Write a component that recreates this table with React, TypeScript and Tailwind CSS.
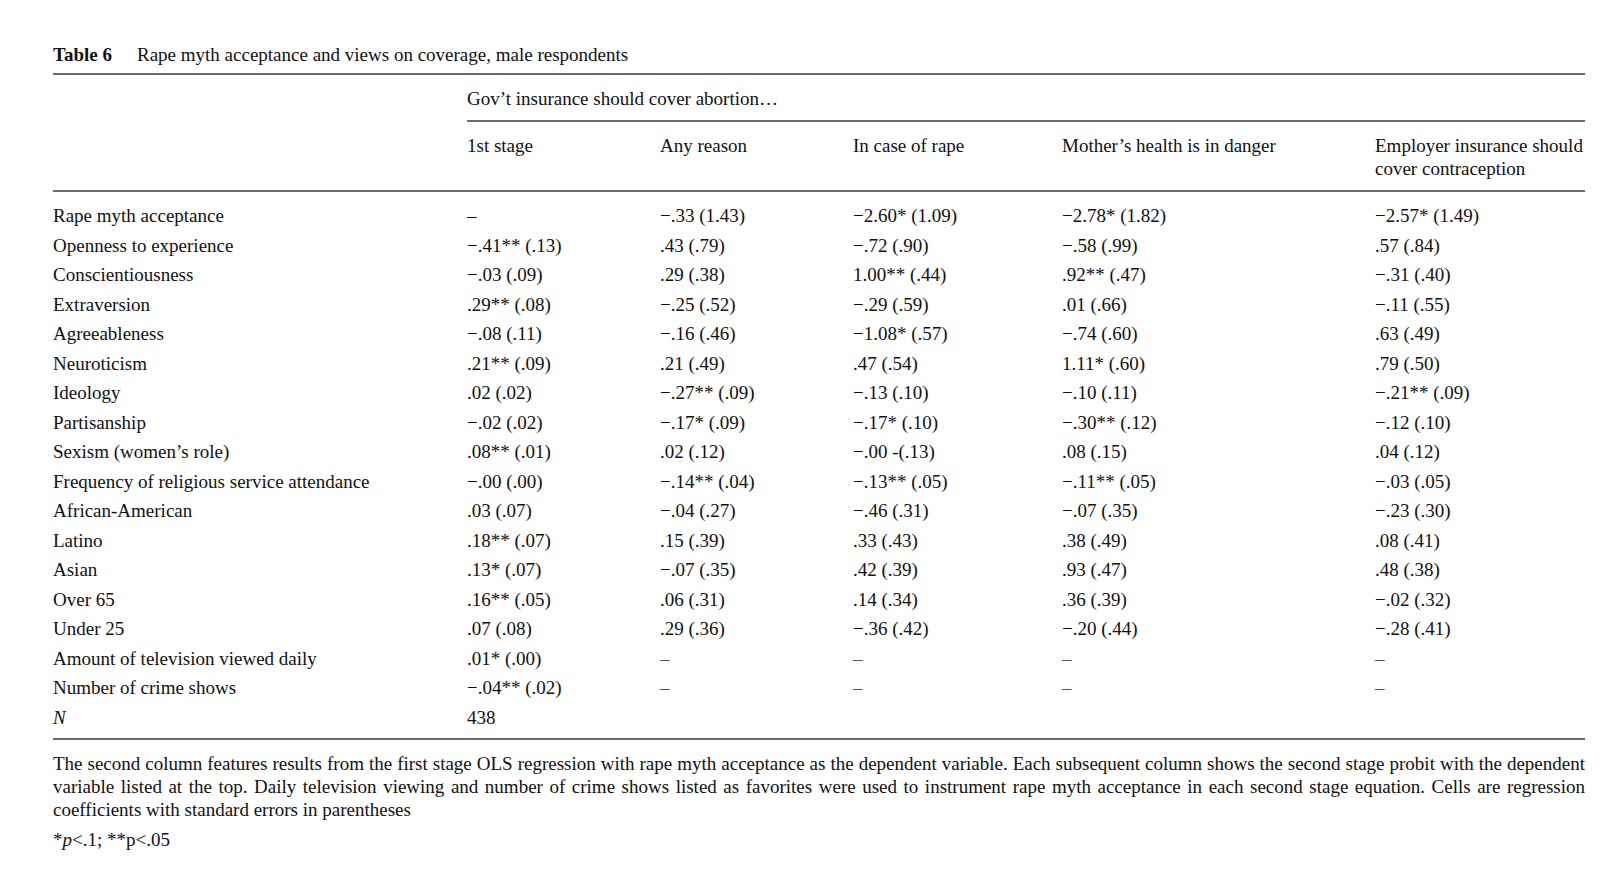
import React from 'react'

type Row = { label: string; italic?: boolean; cells: string[] }

const rows: Row[] = [
  { label: 'Rape myth acceptance', cells: ['–', '−.33 (1.43)', '−2.60* (1.09)', '−2.78* (1.82)', '−2.57* (1.49)'] },
  { label: 'Openness to experience', cells: ['−.41** (.13)', '.43 (.79)', '−.72 (.90)', '−.58 (.99)', '.57 (.84)'] },
  { label: 'Conscientiousness', cells: ['−.03 (.09)', '.29 (.38)', '1.00** (.44)', '.92** (.47)', '−.31 (.40)'] },
  { label: 'Extraversion', cells: ['.29** (.08)', '−.25 (.52)', '−.29 (.59)', '.01 (.66)', '−.11 (.55)'] },
  { label: 'Agreeableness', cells: ['−.08 (.11)', '−.16 (.46)', '−1.08* (.57)', '−.74 (.60)', '.63 (.49)'] },
  { label: 'Neuroticism', cells: ['.21** (.09)', '.21 (.49)', '.47 (.54)', '1.11* (.60)', '.79 (.50)'] },
  { label: 'Ideology', cells: ['.02 (.02)', '−.27** (.09)', '−.13 (.10)', '−.10 (.11)', '−.21** (.09)'] },
  { label: 'Partisanship', cells: ['−.02 (.02)', '−.17* (.09)', '−.17* (.10)', '−.30** (.12)', '−.12 (.10)'] },
  { label: 'Sexism (women’s role)', cells: ['.08** (.01)', '.02 (.12)', '−.00 -(.13)', '.08 (.15)', '.04 (.12)'] },
  { label: 'Frequency of religious service attendance', cells: ['−.00 (.00)', '−.14** (.04)', '−.13** (.05)', '−.11** (.05)', '−.03 (.05)'] },
  { label: 'African-American', cells: ['.03 (.07)', '−.04 (.27)', '−.46 (.31)', '−.07 (.35)', '−.23 (.30)'] },
  { label: 'Latino', cells: ['.18** (.07)', '.15 (.39)', '.33 (.43)', '.38 (.49)', '.08 (.41)'] },
  { label: 'Asian', cells: ['.13* (.07)', '−.07 (.35)', '.42 (.39)', '.93 (.47)', '.48 (.38)'] },
  { label: 'Over 65', cells: ['.16** (.05)', '.06 (.31)', '.14 (.34)', '.36 (.39)', '−.02 (.32)'] },
  { label: 'Under 25', cells: ['.07 (.08)', '.29 (.36)', '−.36 (.42)', '−.20 (.44)', '−.28 (.41)'] },
  { label: 'Amount of television viewed daily', cells: ['.01* (.00)', '–', '–', '–', '–'] },
  { label: 'Number of crime shows', cells: ['−.04** (.02)', '–', '–', '–', '–'] },
  { label: 'N', italic: true, cells: ['438', '', '', '', ''] },
]

// column widths after the label column
const colW = ['w-[193px]', 'w-[193px]', 'w-[209px]', 'w-[313px]', 'w-[210px]']

const Rule = ({ className = '' }: { className?: string }) => (
  <div className={`h-[2px] bg-[#6b6b6b] ${className}`} />
)

const App: React.FC = () => {
  return (
    <div
      className="min-h-screen bg-white text-[#111] text-[19px] leading-[23px] pl-[53px] pr-[15px] pt-[43px]"
      style={{ fontFamily: '"Liberation Serif", "Times New Roman", serif' }}
    >
      {/* titulo */}
      <div className="flex h-[23px]">
        <span className="w-[84px] font-bold">Table 6</span>
        <span>Rape myth acceptance and views on coverage, male respondents</span>
      </div>
      <Rule className="mt-[7px]" />

      {/* cabecera */}
      <div className="pl-[414px]">
        <div className="mt-[12px]">Gov’t insurance should cover abortion…</div>
        <Rule className="mt-[10px]" />
      </div>
      <div className="flex mt-[12px]">
        <div className="w-[414px]" />
        <div className={colW[0]}>1st stage</div>
        <div className={colW[1]}>Any reason</div>
        <div className={colW[2]}>In case of rape</div>
        <div className={colW[3]}>Mother’s health is in danger</div>
        <div className={colW[4]}>
          Employer insurance should
          <br />
          cover contraception
        </div>
      </div>
      <Rule className="mt-[10px]" />

      {/* filas */}
      <div className="mt-[9px]">
        {rows.map((r) => (
          <div key={r.label} className="flex items-center h-[29.5px]">
            <div className={`w-[414px] ${r.italic ? 'italic' : ''}`}>{r.label}</div>
            {r.cells.map((c, i) => (
              <div key={i} className={`${colW[i]} ${c === '–' && i > 0 && r.cells[0] !== '–' ? 'text-[#555]' : ''}`}>
                {c}
              </div>
            ))}
          </div>
        ))}
      </div>
      <Rule className="mt-[6px]" />

      {/* notas */}
      <div className="mt-[12px]">
        <div className="text-justify [text-align-last:justify]">
          The second column features results from the first stage OLS regression with rape myth acceptance as the dependent variable. Each subsequent column shows the second stage probit with the dependent
        </div>
        <div className="text-justify [text-align-last:justify]">
          variable listed at the top. Daily television viewing and number of crime shows listed as favorites were used to instrument rape myth acceptance in each second stage equation. Cells are regression
        </div>
        <div>coefficients with standard errors in parentheses</div>
      </div>
      <div className="mt-[7px]">
        *<i>p</i>&lt;.1; **p&lt;.05
      </div>
    </div>
  )
}

export default App
